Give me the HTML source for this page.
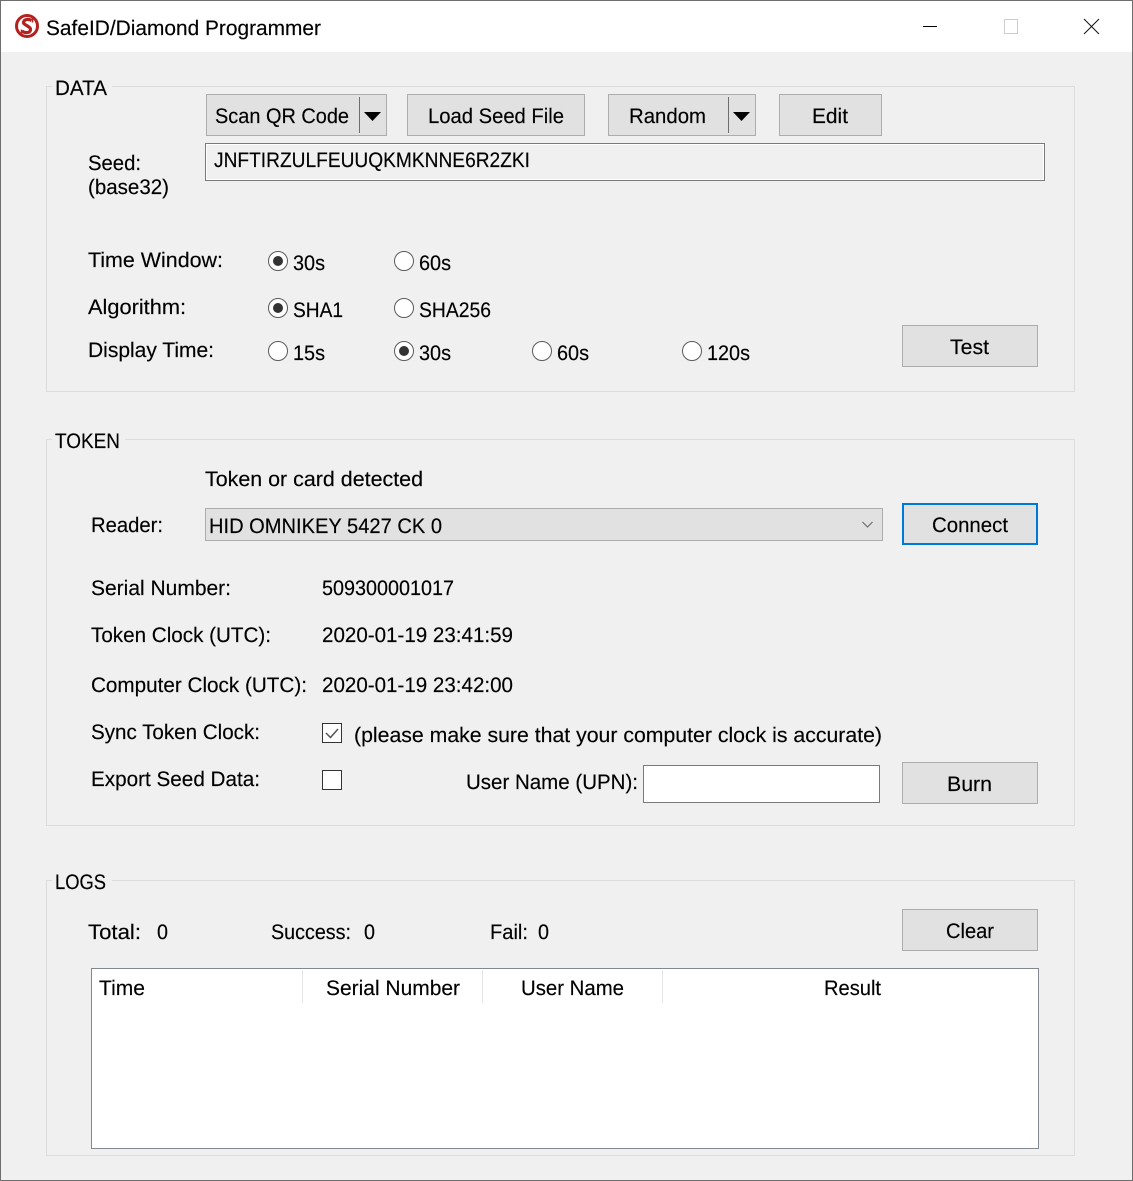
<!DOCTYPE html>
<html lang="en"><head><meta charset="utf-8"><title>SafeID/Diamond Programmer</title>
<style>
html,body{margin:0;padding:0;background:#f0f0f0}
svg{display:block}
text{font-family:"Liberation Sans",Arial,sans-serif;font-size:21px;fill:#000;stroke:#000;stroke-width:.15px;text-rendering:geometricPrecision}
.b{fill:#e1e1e1;stroke:#adadad;stroke-width:1}
.g{fill:none;stroke:#dcdcdc;stroke-width:1}
.rb{fill:#fff;stroke:#5a5a5a;stroke-width:1}
.lb{fill:#f0f0f0}
</style></head><body>
<svg width="1133" height="1181" viewBox="0 0 1133 1181" xmlns="http://www.w3.org/2000/svg">
<rect x="0" y="0" width="1133" height="1181" fill="#f0f0f0"/>
<rect x="0" y="0" width="1133" height="52" fill="#fff"/>
<rect x="0.500" y="0.500" width="1132" height="1180" fill="none" stroke="#6e6e6e"/>

<!-- title bar -->
<circle cx="27" cy="26" r="10.500" fill="#fff" stroke="#b5211f" stroke-width="3"/>
<path d="M31.500 20.500C29 18.800 24.500 18.800 23.500 22C22.800 25.200 31 26 30.500 29.800C30 33.200 25 33.400 22 31" fill="none" stroke="#b5211f" stroke-width="3.200"/>
<path d="M32.500 18.500V22.500M21.500 29.500V33.500" stroke="#b5211f" stroke-width="1.500" fill="none"/>
<text x="46" y="35" textLength="275" lengthAdjust="spacingAndGlyphs">SafeID/Diamond Programmer</text>
<path d="M923 26.500H937" stroke="#000" stroke-width="1"/>
<rect x="1004.500" y="19.500" width="13" height="14" fill="none" stroke="#ccc"/>
<path d="M1084 19L1099 34M1099 19L1084 34" stroke="#111" stroke-width="1" fill="none"/>

<!-- group boxes -->
<rect class="g" x="46.500" y="86.500" width="1028" height="305"/>
<rect class="lb" x="52" y="80" width="60" height="14"/>
<text x="55" y="95" textLength="52" lengthAdjust="spacingAndGlyphs">DATA</text>
<rect class="g" x="46.500" y="439.500" width="1028" height="386"/>
<rect class="lb" x="52" y="432" width="73" height="14"/>
<text x="55" y="448" textLength="65" lengthAdjust="spacingAndGlyphs">TOKEN</text>
<rect class="g" x="46.500" y="880.500" width="1028" height="275"/>
<rect class="lb" x="52" y="873" width="60" height="14"/>
<text x="55" y="889" textLength="51" lengthAdjust="spacingAndGlyphs">LOGS</text>

<!-- DATA -->
<rect class="b" x="206.500" y="94.500" width="180" height="41"/>
<text x="215" y="123" textLength="134" lengthAdjust="spacingAndGlyphs">Scan QR Code</text>
<rect x="359" y="97" width="1" height="36" fill="#6d6d6d"/>
<path d="M364 112H381L372.500 121Z" fill="#000"/>
<rect class="b" x="407.500" y="94.500" width="177" height="41"/>
<text x="428" y="123" textLength="136" lengthAdjust="spacingAndGlyphs">Load Seed File</text>
<rect class="b" x="608.500" y="94.500" width="147" height="41"/>
<text x="629" y="123" textLength="77" lengthAdjust="spacingAndGlyphs">Random</text>
<rect x="728" y="97" width="1" height="36" fill="#6d6d6d"/>
<path d="M733 112H750L741.500 121Z" fill="#000"/>
<rect class="b" x="779.500" y="94.500" width="102" height="41"/>
<text x="812" y="123" textLength="36" lengthAdjust="spacingAndGlyphs">Edit</text>

<text x="88" y="170" textLength="53" lengthAdjust="spacingAndGlyphs">Seed:</text>
<text x="88" y="194" textLength="81" lengthAdjust="spacingAndGlyphs">(base32)</text>
<rect x="205.500" y="143.500" width="839" height="37" fill="#f0f0f0" stroke="#7a7a7a"/>
<rect x="206.500" y="144.500" width="837" height="35" fill="none" stroke="#fff"/>
<text x="214" y="167" textLength="316" lengthAdjust="spacingAndGlyphs">JNFTIRZULFEUUQKMKNNE6R2ZKI</text>

<text x="88" y="267" textLength="135" lengthAdjust="spacingAndGlyphs">Time Window:</text>
<circle class="rb" cx="278" cy="261" r="9.500"/><circle cx="278" cy="261" r="5" fill="#333"/>
<text x="293" y="270" textLength="32" lengthAdjust="spacingAndGlyphs">30s</text>
<circle class="rb" cx="404" cy="261" r="9.500"/>
<text x="419" y="270" textLength="32" lengthAdjust="spacingAndGlyphs">60s</text>

<text x="88" y="314" textLength="98" lengthAdjust="spacingAndGlyphs">Algorithm:</text>
<circle class="rb" cx="278" cy="308" r="9.500"/><circle cx="278" cy="308" r="5" fill="#333"/>
<text x="293" y="317" textLength="50" lengthAdjust="spacingAndGlyphs">SHA1</text>
<circle class="rb" cx="404" cy="308" r="9.500"/>
<text x="419" y="317" textLength="72" lengthAdjust="spacingAndGlyphs">SHA256</text>

<text x="88" y="357" textLength="126" lengthAdjust="spacingAndGlyphs">Display Time:</text>
<circle class="rb" cx="278" cy="351" r="9.500"/>
<text x="293" y="360" textLength="32" lengthAdjust="spacingAndGlyphs">15s</text>
<circle class="rb" cx="404" cy="351" r="9.500"/><circle cx="404" cy="351" r="5" fill="#333"/>
<text x="419" y="360" textLength="32" lengthAdjust="spacingAndGlyphs">30s</text>
<circle class="rb" cx="542" cy="351" r="9.500"/>
<text x="557" y="360" textLength="32" lengthAdjust="spacingAndGlyphs">60s</text>
<circle class="rb" cx="692" cy="351" r="9.500"/>
<text x="707" y="360" textLength="43" lengthAdjust="spacingAndGlyphs">120s</text>
<rect class="b" x="902.500" y="325.500" width="135" height="41"/>
<text x="950" y="354" textLength="39" lengthAdjust="spacingAndGlyphs">Test</text>

<!-- TOKEN -->
<text x="205" y="486" textLength="218" lengthAdjust="spacingAndGlyphs">Token or card detected</text>
<text x="91" y="532" textLength="72" lengthAdjust="spacingAndGlyphs">Reader:</text>
<rect class="b" x="205.500" y="508.500" width="677" height="32"/>
<text x="209" y="533" textLength="233" lengthAdjust="spacingAndGlyphs">HID OMNIKEY 5427 CK 0</text>
<path d="M862.500 522L867.500 527L872.500 522" fill="none" stroke="#666" stroke-width="1.100"/>
<rect x="903" y="504" width="134" height="40" fill="#e1e1e1" stroke="#0078d7" stroke-width="2"/>
<text x="932" y="532" textLength="76" lengthAdjust="spacingAndGlyphs">Connect</text>

<text x="91" y="595" textLength="140" lengthAdjust="spacingAndGlyphs">Serial Number:</text>
<text x="322" y="595" textLength="132" lengthAdjust="spacingAndGlyphs">509300001017</text>
<text x="91" y="642" textLength="180" lengthAdjust="spacingAndGlyphs">Token Clock (UTC):</text>
<text x="322" y="642" textLength="191" lengthAdjust="spacingAndGlyphs">2020-01-19 23:41:59</text>
<text x="91" y="692" textLength="216" lengthAdjust="spacingAndGlyphs">Computer Clock (UTC):</text>
<text x="322" y="692" textLength="191" lengthAdjust="spacingAndGlyphs">2020-01-19 23:42:00</text>
<text x="91" y="739" textLength="169" lengthAdjust="spacingAndGlyphs">Sync Token Clock:</text>
<rect x="322.500" y="723.500" width="19" height="19" fill="#fff" stroke="#333"/>
<path d="M326 733L330.500 737.500L338 729" fill="none" stroke="#555" stroke-width="1.500"/>
<text x="354" y="742" textLength="528" lengthAdjust="spacingAndGlyphs">(please make sure that your computer clock is accurate)</text>
<text x="91" y="786" textLength="169" lengthAdjust="spacingAndGlyphs">Export Seed Data:</text>
<rect x="322.500" y="770.500" width="19" height="19" fill="#fff" stroke="#333"/>
<text x="466" y="789" textLength="172" lengthAdjust="spacingAndGlyphs">User Name (UPN):</text>
<rect x="643.500" y="765.500" width="236" height="37" fill="#fff" stroke="#7a7a7a"/>
<rect class="b" x="902.500" y="762.500" width="135" height="41"/>
<text x="947" y="791" textLength="45" lengthAdjust="spacingAndGlyphs">Burn</text>

<!-- LOGS -->
<text x="88" y="939" textLength="53" lengthAdjust="spacingAndGlyphs">Total:</text>
<text x="157" y="939" textLength="11" lengthAdjust="spacingAndGlyphs">0</text>
<text x="271" y="939" textLength="80" lengthAdjust="spacingAndGlyphs">Success:</text>
<text x="364" y="939" textLength="11" lengthAdjust="spacingAndGlyphs">0</text>
<text x="490" y="939" textLength="38" lengthAdjust="spacingAndGlyphs">Fail:</text>
<text x="538" y="939" textLength="11" lengthAdjust="spacingAndGlyphs">0</text>
<rect class="b" x="902.500" y="909.500" width="135" height="41"/>
<text x="946" y="938" textLength="48" lengthAdjust="spacingAndGlyphs">Clear</text>
<rect x="91.500" y="968.500" width="947" height="180" fill="#fff" stroke="#828790"/>
<text x="99" y="995" textLength="46" lengthAdjust="spacingAndGlyphs">Time</text>
<text x="326" y="995" textLength="134" lengthAdjust="spacingAndGlyphs">Serial Number</text>
<text x="521" y="995" textLength="103" lengthAdjust="spacingAndGlyphs">User Name</text>
<text x="824" y="995" textLength="57" lengthAdjust="spacingAndGlyphs">Result</text>
<rect x="302" y="970" width="1" height="33" fill="#e5e5e5"/>
<rect x="482" y="970" width="1" height="33" fill="#e5e5e5"/>
<rect x="662" y="970" width="1" height="33" fill="#e5e5e5"/>
</svg>
</body></html>
